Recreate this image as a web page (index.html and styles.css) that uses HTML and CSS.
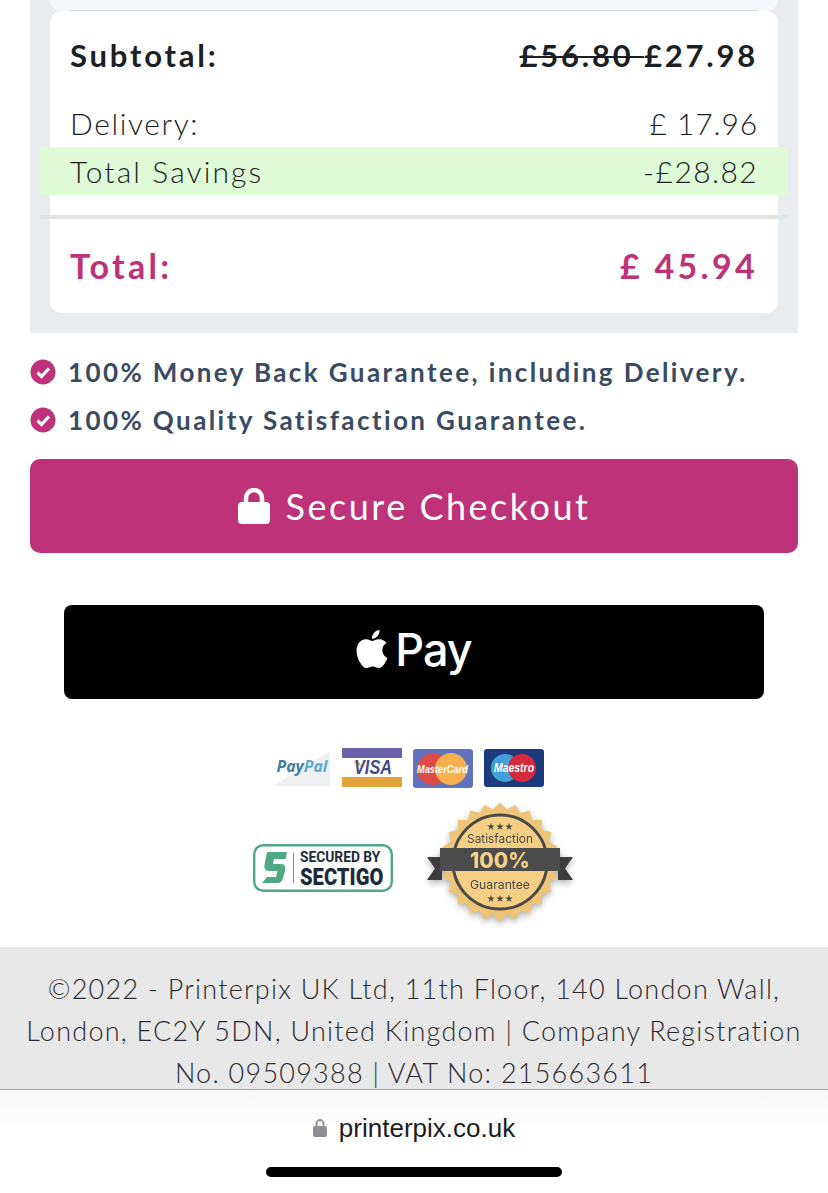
FILE: index.html
```html
<!DOCTYPE html>
<html>
<head>
    <meta charset="UTF-8">
    <meta name="viewport" content="width=device-width, initial-scale=1.0">
    <title>Checkout</title>
    <link rel="stylesheet" href="styles.css">
</head>
<body>
    <div class="page">
        <div class="content">
            <div class="summary">
                <div class="prevCard"></div>
                <div class="card">
                    <div class="row subtotal">
                        <span>Subtotal:</span>
                        <span><s>£56.80 </s>£27.98</span>
                    </div>
                    <div class="row delivery">
                        <span>Delivery:</span>
                        <span class="amount">£ 17.96</span>
                    </div>
                    <div class="row savings">
                        <span>Total Savings</span>
                        <span class="amount saved">-£28.82</span>
                    </div>
                    <div class="divider"></div>
                    <div class="row total">
                        <span>Total:</span>
                        <span>£ 45.94</span>
                    </div>
                </div>
            </div>

            <ul class="guarantees">
                <li>
                    <svg class="check" viewBox="0 0 26 26"><circle cx="13" cy="13" r="12.5" fill="#bd3278"/><path d="M7.5 13.5l4 4 7.5-8" fill="none" stroke="#fff" stroke-width="3.2"/></svg>
                    100% Money Back Guarantee, including Delivery.
                </li>
                <li>
                    <svg class="check" viewBox="0 0 26 26"><circle cx="13" cy="13" r="12.5" fill="#bd3278"/><path d="M7.5 13.5l4 4 7.5-8" fill="none" stroke="#fff" stroke-width="3.2"/></svg>
                    100% Quality Satisfaction Guarantee.
                </li>
            </ul>

            <a class="checkoutBtn" href="#">
                <svg class="lock" viewBox="0 0 32 36"><path d="M8 16V10a8 8 0 0 1 16 0v6" fill="none" stroke="#fff" stroke-width="4.5"/><rect x="0" y="14" width="32" height="22" rx="4" fill="#fff"/></svg>
                Secure Checkout
            </a>

            <a class="applePay" href="#">
                <svg class="appleLogo" viewBox="0 0 24 24"><path fill="#fff" d="M12.152 6.896c-.948 0-2.415-1.078-3.96-1.04-2.04.027-3.91 1.183-4.961 3.014-2.117 3.675-.546 9.103 1.519 12.09 1.013 1.454 2.208 3.09 3.792 3.039 1.52-.065 2.09-.987 3.935-.987 1.831 0 2.35.987 3.96.948 1.637-.026 2.676-1.48 3.676-2.948 1.156-1.688 1.636-3.325 1.662-3.415-.039-.013-3.182-1.221-3.22-4.857-.026-3.04 2.48-4.494 2.597-4.559-1.429-2.09-3.623-2.324-4.39-2.376-2-.156-3.675 1.09-4.61 1.09zM15.53 3.83c.843-1.012 1.4-2.427 1.245-3.83-1.207.052-2.662.805-3.532 1.818-.78.896-1.454 2.338-1.273 3.714 1.338.104 2.715-.688 3.559-1.701"/></svg>
                <span class="payWord">Pay</span>
            </a>

            <div class="payIcons">
                <svg width="58" height="38" viewBox="0 0 58 38">
                    <path d="M0 37L57 2v33a2 2 0 0 1-2 2z" fill="#eef0f1"/>
                    <text x="29" y="23" text-anchor="middle" class="payText" fill="#3d7ea6" textLength="51" lengthAdjust="spacingAndGlyphs">Pay<tspan fill="#5fa8d3">Pal</tspan></text>
                </svg>
                <svg width="60" height="40" viewBox="0 0 60 40">
                    <rect y="0" width="60" height="10" rx="1" fill="#6a62a8"/>
                    <rect y="29" width="60" height="10" rx="1" fill="#e0a43a"/>
                    <path d="M11 14h6l3 5z" fill="#e8b04a"/>
                    <text x="31" y="26" text-anchor="middle" class="visaText" fill="#3f4a8c" textLength="38" lengthAdjust="spacingAndGlyphs">VISA</text>
                </svg>
                <svg width="60" height="39" viewBox="0 0 60 39">
                    <rect width="60" height="39" rx="3" fill="#5f72bb"/>
                    <circle cx="20" cy="20" r="16" fill="#dd4b46"/>
                    <circle cx="38" cy="20" r="16" fill="#f7b04d"/>
                    <text x="29.5" y="23.5" text-anchor="middle" class="cardText" fill="#fff" textLength="51" lengthAdjust="spacingAndGlyphs">MasterCard</text>
                </svg>
                <svg width="60" height="38" viewBox="0 0 60 38">
                    <rect width="60" height="38" rx="3" fill="#1c3a7c"/>
                    <circle cx="21" cy="19" r="14" fill="#42a0d8"/>
                    <circle cx="38" cy="19" r="14" fill="#d42a3b"/>
                    <text x="30" y="23" text-anchor="middle" class="maestroText" fill="#fff" textLength="40" lengthAdjust="spacingAndGlyphs">Maestro</text>
                </svg>
            </div>

            <div class="badges">
                <svg class="sectigo" width="140" height="48" viewBox="0 0 140 48">
                    <rect x="1.2" y="1.2" width="137.6" height="45.6" rx="9" fill="#fff" stroke="#4fa985" stroke-width="2.4"/>
                    <path d="M14 8H34L32.500 15H21L20 20H28C32 20 33 23 32 27L30 34C29 37 28 39 24 39H9L14 33H23L24.500 27H16C12 27 11 24 11.500 21Z" fill="#4fa985"/>
                    <rect x="40" y="9" width="1" height="30" fill="#4fa985"/>
                    <text transform="translate(47 17.500) scale(.92 1)" class="secBy" fill="#1c2b3a">SECURED BY</text>
                    <text transform="translate(47 41) scale(.84 1)" class="secName" fill="#1c2b3a">SECTIGO</text>
                </svg>
                <svg class="seal" width="150" height="126" viewBox="0 0 150 126">
                    <g fill="#eec577">
                        <rect x="33" y="19" width="84" height="84"/>
                        <rect x="33" y="19" width="84" height="84" transform="rotate(15 75 61)"/>
                        <rect x="33" y="19" width="84" height="84" transform="rotate(30 75 61)"/>
                        <rect x="33" y="19" width="84" height="84" transform="rotate(45 75 61)"/>
                        <rect x="33" y="19" width="84" height="84" transform="rotate(60 75 61)"/>
                        <rect x="33" y="19" width="84" height="84" transform="rotate(75 75 61)"/>
                    </g>
                    <circle cx="75" cy="61" r="47" fill="#f6cf85" stroke="#4a4a4a" stroke-width="3"/>
                    <path d="M2 56H17V79H2L10 67.500Z" fill="#3c3c3c"/>
                    <path d="M148 56H133V79H148L140 67.500Z" fill="#3c3c3c"/>
                    <rect x="15" y="47" width="120" height="23" fill="#4c4c4c"/>
                    <text x="75" y="42" text-anchor="middle" class="sealSmall" fill="#4a4a4a" textLength="66" lengthAdjust="spacingAndGlyphs">Satisfaction</text>
                    <text x="75" y="67" text-anchor="middle" class="sealBig" fill="#f6cf85" textLength="60" lengthAdjust="spacingAndGlyphs">100%</text>
                    <text x="75" y="88" text-anchor="middle" class="sealSmall" fill="#4a4a4a" textLength="60" lengthAdjust="spacingAndGlyphs">Guarantee</text>
                    <text x="75" y="29" text-anchor="middle" class="sealStars" fill="#4a4a4a">★★★</text>
                    <text x="75" y="101" text-anchor="middle" class="sealStars" fill="#4a4a4a">★★★</text>
                </svg>
            </div>

            <footer class="legal">
                ©2022 - Printerpix UK Ltd, 11th Floor, 140 London Wall, London, EC2Y 5DN, United Kingdom | Company Registration No. 09509388 | VAT No: 215663611
            </footer>
        </div>

        <div class="browserBar">
            <div class="address">
                <svg class="urlLock" viewBox="0 0 14 18"><path d="M3.500 8V4.500a3.500 3.500 0 0 1 7 0V8" fill="none" stroke="#8e8e93" stroke-width="1.800"/><rect y="7" width="14" height="11" rx="2" fill="#8e8e93"/></svg>
                printerpix.co.uk
            </div>
            <div class="homeBar"></div>
        </div>
    </div>
</body>
</html>
```

FILE: styles.css
```css
*{margin: 0; padding: 0; box-sizing: border-box;}
body{ font-family: "Lato", "Open Sans", sans-serif; background: #fff; color: #1b1e22; }
a{ text-decoration: none; }
.page{ width: 828px; height: 1193px; overflow: hidden; display: flex; flex-direction: column; }
.content{ height: 1089px; flex: none; overflow: hidden; }

.summary{ margin: 0 30px; padding: 0 20px 20px; height: 333px; background: #e9ecef; }
.prevCard{ height: 11px; padding: 0 20px; background: #f5f7fa; border-radius: 0 0 12px 12px; position: relative; }
.prevCard::after{ content: ""; position: absolute; left: 20px; right: 20px; bottom: 0; height: 1px; background: #d5d8de; }
.card{ height: 302px; background: #fff; border-radius: 12px; padding: 0 20px; }
.row{ display: flex; justify-content: space-between; align-items: center; }
.subtotal{ height: 90px; padding-bottom: 3px; font-size: 31px; font-weight: 700; letter-spacing: 2.8px; }
.subtotal s{ text-decoration-thickness: 2px; }
.delivery{ height: 46px; padding-bottom: 2px; font-size: 30px; font-weight: 300; letter-spacing: 1.6px; }
.savings{ height: 48px; margin: 0 -30px; padding: 0 30px; background: #dffbd8; font-size: 30px; font-weight: 300; letter-spacing: 2.1px; }
.amount{ letter-spacing: .9px; }
.saved{ letter-spacing: 1.4px; }
.divider{ height: 4px; margin: 20px -30px 0; background: #e2e3e8; }
.total{ height: 95px; padding-bottom: 2px; font-size: 34px; font-weight: 700; letter-spacing: 3.3px; color: #bd3278; }

.guarantees{ list-style: none; margin: 15px 30px 0; }
.guarantees li{ height: 48px; display: flex; align-items: center; gap: 12px; font-size: 26px; font-weight: 700; letter-spacing: 2.4px; color: #3a4a63; }
.check{ width: 26px; height: 26px; flex: none; }

.checkoutBtn{ margin: 15px 30px 0; height: 94px; display: flex; align-items: center; justify-content: center; gap: 16px; border-radius: 10px; background: #bd3278; color: #fff; font-size: 36px; letter-spacing: 2.5px; }
.lock{ width: 32px; height: 36px; }

.applePay{ margin: 52px 64px 0; padding-right: 3px; height: 94px; display: flex; align-items: center; justify-content: center; gap: 4px; background: #000; border-radius: 8px; color: #fff; font-family: "Inter", sans-serif; font-size: 45px; font-weight: 500; letter-spacing: -1px; }
.appleLogo{ width: 38px; height: 40px; margin-top: -6px; }
.payWord{ margin-bottom: 5px; }

.payIcons{ margin-top: 49px; padding-right: 12px; height: 40px; display: flex; justify-content: center; align-items: center; gap: 11px; }
.payText{ font: italic 700 16px "Open Sans", sans-serif; }
.visaText{ font: italic 700 20px "Liberation Sans", sans-serif; }
.cardText{ font: italic 700 10px "Liberation Sans", sans-serif; }
.maestroText{ font: italic 700 12px "Liberation Sans", sans-serif; }

.badges{ margin-top: 13px; height: 130px; display: flex; justify-content: center; align-items: center; gap: 32px; }
.sectigo{ margin-top: 4px; }
.seal{ margin-bottom: 4px; filter: drop-shadow(0 3px 3px rgba(0,0,0,.3)); }
.secBy{ font: 700 15px "Roboto", sans-serif; }
.secName{ font: 900 24px "Roboto", sans-serif; }
.sealSmall{ font: 400 12px "Inter", sans-serif; }
.sealBig{ font: 800 22px "Inter", sans-serif; }
.sealStars{ font: 10px "DejaVu Sans", sans-serif; }

.legal{ margin-top: 16px; padding: 21px 18px 0; height: 142px; background: #e8e8e8; text-align: center; font-size: 27px; font-weight: 300; line-height: 42px; letter-spacing: 1.25px; color: #2a2a2e; overflow: hidden; }

.browserBar{ height: 104px; border-top: 1px solid #a3a3a3; background: linear-gradient(#f8f8f8, #fff 40%); display: flex; flex-direction: column; align-items: center; }
.address{ margin-top: 23px; display: flex; align-items: center; gap: 12px; font-size: 26px; line-height: 30px; color: #1c1c1e; font-family: "Liberation Sans", sans-serif; }
.urlLock{ width: 14px; height: 18px; }
.homeBar{ margin-top: 24px; width: 296px; height: 10px; background: #000; border-radius: 5px; }
```
